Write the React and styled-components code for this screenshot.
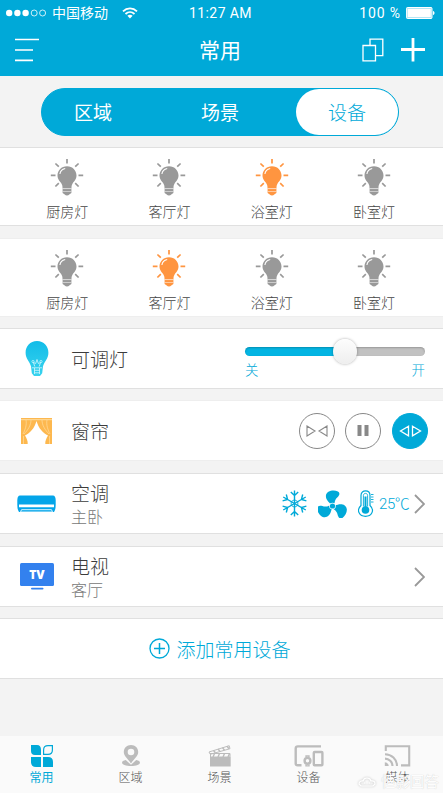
import React from 'react';
import styled, { createGlobalStyle, css } from 'styled-components';

const BLUE = '#00a9d8';
const GREY = '#999999';
const ORANGE = '#ff9540';
const LINE = '#e0e0e0';

const GlobalStyle = createGlobalStyle`
  * {
    box-sizing: border-box;
  }

  body {
    margin: 0;
    background: #fff;
    font-family: "Noto Sans CJK SC", sans-serif;
    font-weight: 300;
    overflow: hidden;
  }

  svg {
    display: block;
    flex: none;
  }
`;

const Phone = styled.div`
  width: 443px;
  height: 793px;
  display: flex;
  flex-direction: column;
  background: #f3f3f3;
  overflow: hidden;
`;

const Header = styled.header`
  flex: none;
  height: 76px;
  background: ${BLUE};
  color: #fff;
`;

const StatusBar = styled.div`
  display: grid;
  grid-template-columns: 1fr auto 1fr;
  align-items: center;
  height: 25px;
  padding: 0 8px 0 6px;
`;

const StatusGroup = styled.div`
  display: flex;
  align-items: center;
  justify-content: ${props => (props.$end ? 'flex-end' : 'flex-start')};
  gap: 5px;
`;

const StatusText = styled.span`
  font-family: Roboto, "Noto Sans CJK SC", sans-serif;
  font-size: 14px;
  line-height: 20px;
  font-weight: 400;
  letter-spacing: ${props => props.$spacing || 0}px;
  white-space: nowrap;
`;

const NavBar = styled.div`
  display: grid;
  grid-template-columns: 1fr auto 1fr;
  align-items: center;
  height: 50px;
  padding: 0 18px 0 15px;
`;

const NavTitle = styled.h1`
  margin: -2px 0 0;
  font-size: 21px;
  line-height: 30px;
  font-weight: 400;
`;

const NavActions = styled.div`
  display: flex;
  align-items: center;
  justify-content: flex-end;
  gap: 17px;
`;

const Segments = styled.div`
  flex: none;
  display: grid;
  grid-template-columns: 102px 1fr 102px;
  width: 358px;
  height: 48px;
  margin: 12px 0 11px 41px;
  border: 1px solid ${BLUE};
  border-radius: 24px;
  background: ${BLUE};
`;

const Segment = styled.button`
  border: 0;
  padding: 0 0 1px;
  border-radius: 23px;
  font: inherit;
  font-size: 19px;
  line-height: 28px;
  font-weight: 400;
  color: #fff;
  background: transparent;

  ${props => props.$active && css`
    font-weight: 300;
    color: ${BLUE};
    background: #fff;
  `}
`;

const LampRow = styled.section`
  flex: none;
  display: grid;
  grid-template-columns: repeat(4, 102.3px);
  height: 79px;
  margin-bottom: ${props => props.$gap}px;
  padding: 10px 0 0 16px;
  background: #fff;
  border: solid ${props => (props.$faint ? '#eeeeee' : LINE)};
  border-width: 1px 0;
`;

const Lamp = styled.div`
  display: flex;
  flex-direction: column;
  align-items: center;
  font-size: 14px;
  line-height: 20px;
  color: #444;
  gap: 5px;
`;

const Row = styled.section`
  flex: none;
  display: flex;
  align-items: center;
  height: 61px;
  margin-bottom: ${props => props.$gap || 12}px;
  padding-right: ${props => props.$right || 18}px;
  background: #fff;
  border: solid ${props => (props.$faint ? '#eeeeee' : LINE)};
  border-width: 1px 0;
`;

const RowIcon = styled.div`
  display: flex;
  justify-content: center;
  width: 71px;
  padding-left: 2px;
`;

const RowText = styled.div`
  flex: 1;
`;

const RowTitle = styled.div`
  font-size: 19px;
  line-height: 24px;
  color: #3c3c3c;
`;

const RowSubtitle = styled.div`
  font-size: 16px;
  line-height: 22px;
  color: #777;
`;

const Dimmer = styled.div`
  width: 180px;
  padding-top: 9px;
`;

const Track = styled.div`
  position: relative;
  height: 9px;
  border-radius: 5px;
  background: linear-gradient(90deg, #04b5e3 55%, #c2c2c2 55%);
  box-shadow: inset 0 1px 2px rgba(0, 0, 0, 0.22);
`;

const Knob = styled.div`
  position: absolute;
  top: -8px;
  left: 88px;
  width: 24px;
  height: 25px;
  border-radius: 50%;
  background: linear-gradient(#fdfdfd, #eeeeee);
  box-shadow: 0 0 3px rgba(0, 0, 0, 0.35);
`;

const DimmerLabels = styled.div`
  display: flex;
  justify-content: space-between;
  margin-top: 3px;
  font-size: 13.5px;
  line-height: 20px;
  color: ${BLUE};
`;

const CurtainControls = styled.div`
  display: flex;
  gap: 10px;

  button:last-child {
    margin-left: 1px;
  }
`;

const RoundButton = styled.button`
  display: flex;
  align-items: center;
  justify-content: center;
  width: 36px;
  height: 36px;
  padding: 0;
  border-radius: 50%;
  color: ${props => (props.$active ? '#fff' : '#888')};
  border: 1px solid ${props => (props.$active ? BLUE : '#888')};
  background: ${props => (props.$active ? BLUE : '#fff')};
`;

const AirStatus = styled.div`
  display: flex;
  align-items: center;
  color: ${BLUE};
  margin-right: 5px;
  gap: 11px;
`;

const Temperature = styled.span`
  margin-left: -6px;
  width: 30px;
  font-family: Roboto, "Noto Sans CJK SC", sans-serif;
  font-size: 15px;
  line-height: 20px;
  letter-spacing: -0.4px;
  white-space: nowrap;
`;

const AddButton = styled.button`
  flex: none;
  display: flex;
  align-items: center;
  justify-content: center;
  gap: 6px;
  height: 61px;
  padding: 0 3px 0 0;
  background: #fff;
  border: solid ${LINE};
  border-width: 1px 0;
  font: inherit;
  font-size: 19px;
  line-height: 28px;
  color: ${BLUE};
`;

const TabBar = styled.nav`
  position: relative;
  display: grid;
  grid-template-columns: repeat(5, 89px);
  height: 57px;
  margin-top: auto;
  padding-top: 9px;
  background: #fafafa;
  overflow: hidden;
`;

const Tab = styled.div`
  display: flex;
  flex-direction: column;
  align-items: center;
  gap: 1px;
  margin-left: -6px;
  font-size: 12px;
  line-height: 18px;
  font-weight: ${props => (props.$active ? 400 : 300)};
  color: ${props => (props.$active ? BLUE : '#555')};

  svg {
    color: ${props => (props.$active ? BLUE : '#bcbcbc')};
  }
`;

const Watermark = styled.div`
  position: absolute;
  right: 4px;
  bottom: 2px;
  display: flex;
  align-items: center;
  gap: 5px;
  font-size: 14.5px;
  line-height: 20px;
  font-weight: 400;
  color: #fdfdfd;
  text-shadow: 0 0 1px #c4c4c4;
`;

const Signal = () => (
  <svg width="41" height="12" fill="none" stroke="#fff">
    <circle cx="3.2" cy="6" r="3.2" fill="#fff" stroke="none" />
    <circle cx="11.4" cy="6" r="3.2" fill="#fff" stroke="none" />
    <circle cx="19.6" cy="6" r="3.2" fill="#fff" stroke="none" />
    <circle cx="28.2" cy="6" r="3" strokeWidth="0.8" />
    <circle cx="36.6" cy="6" r="3" strokeWidth="0.8" />
  </svg>
);

const WifiIcon = styled.svg`
  margin-left: 9px;
`;

const Wifi = () => (
  <WifiIcon width="16" height="12" viewBox="0 0 16 12" fill="none" stroke="#fff" strokeWidth="1.8">
    <path d="M1 4.3C5 .4 11 .4 15 4.3M3.5 7C6.2 4.4 9.8 4.4 12.5 7" />
    <path d="M5.4 8.8C7 7.4 9 7.4 10.6 8.8L8 11.5Z" fill="#fff" stroke="none" />
  </WifiIcon>
);

const Battery = () => (
  <svg width="29" height="12" viewBox="0 0 29 12">
    <rect x=".5" y=".5" width="25.5" height="11" rx="1" fill="#fff" stroke="#fff" />
    <path d="M1.3 1.5H25.2V10.5H1.3Z" fill="none" stroke={BLUE} strokeWidth=".3" />
    <path d="M27 4C29 4.4 29 7.6 27 8Z" fill="#fff" />
  </svg>
);

const MenuIcon = () => (
  <svg width="24" height="24" stroke="#fff" strokeWidth="1.7">
    <path d="M0 1.5H24M0 12H18M0 22.3H18" />
  </svg>
);

const CopyIcon = () => (
  <svg width="22" height="24" fill="none" stroke="#fff" strokeWidth="1.3">
    <path d="M1 7.5H13.5V22.8H1ZM8 7.5V1.2H20.8V17.7H14" />
  </svg>
);

const PlusIcon = () => (
  <svg width="24" height="24" stroke="#fff" strokeWidth="2.8">
    <path d="M12 0V23.5M0 11.5H24" />
  </svg>
);

const BulbIcon = ({ on }) => {
  const color = on ? ORANGE : GREY;
  return (
    <svg width="34" height="38" viewBox="0 0 34 38" fill="none" stroke={color}>
      <path
        d="M17 1V5.5M0.8 17.3H5.5M28.5 17.3H33.2M5.4 5.5L8.8 8.7M28.6 5.5L25.2 8.7M5.4 28.5L8.8 25.2M28.6 28.5L25.2 25.2"
        strokeWidth="1.7"
      />
      <path
        d="M17 8.2C11.4 8.2 7.5 12.5 7.5 17.4C7.5 21.2 9.8 23 11.4 25.4C12.4 27 12.5 28.3 12.5 30.5H21.5C21.5 28.3 21.6 27 22.6 25.4C24.2 23 26.5 21.2 26.5 17.4C26.5 12.5 22.6 8.2 17 8.2Z"
        fill={color}
        stroke="none"
      />
      <path d="M12.6 30.6H21.4V35L19.6 36.2Q17 38.8 14.4 36.2L12.6 35Z" fill={color} stroke="none" />
      <path d="M12.5 30.6H21.5M12.8 33.5H21.2" stroke="#fff" strokeWidth=".5" />
      <path d="M9.9 16C10.3 13 12.3 11.1 15.2 10.5" stroke="#fff" strokeWidth="1.1" />
    </svg>
  );
};

const DimmableBulb = () => (
  <svg width="24" height="36" viewBox="0 0 24 36" fill="none">
    <defs>
      <linearGradient id="dimmable" x2="0" y2="1">
        <stop stopColor="#12bce8" />
        <stop offset="1" stopColor="#38d3ee" />
      </linearGradient>
    </defs>
    <path
      d="M12 0C5 0 .6 5.3.6 11.7C.6 17.8 4.7 20.5 6 25.3L6.8 32.2L9 35H15L17.2 32.2L18 25.3C19.3 20.5 23.4 17.8 23.4 11.7C23.4 5.3 19 0 12 0Z"
      fill="url(#dimmable)"
    />
    <path
      d="M9.8 25.5L8.4 21.5L10.7 22.5L12 18.5L13.3 22.5L15.6 21.5L14.2 25.5M7 26.8H17M9.5 29.3H14.5M9.5 31.8H14.5M9.5 27V33M14.5 27V33"
      stroke="#d5f8ff"
      strokeWidth=".8"
    />
    <circle cx="8" cy="20.5" r="1.1" stroke="#d5f8ff" strokeWidth=".7" />
    <circle cx="16" cy="20.5" r="1.1" stroke="#d5f8ff" strokeWidth=".7" />
  </svg>
);

const CurtainIcon = () => (
  <svg width="31" height="28" viewBox="0 0 31 28">
    <path
      d="M0 1H31V27H24.3C24 24 25.4 21 27 18.4C22 16.5 17.5 11 15.5 4C13.5 11 9 16.5 4 18.4C5.6 21 7 24 6.7 27H0Z"
      fill="#fdb84f"
    />
    <path d="M0 2.7H31" stroke="#ffdd9e" strokeWidth="1" />
    <path
      d="M5 3C6 8 4 13 2 17M10 3C10 8 7 13 3 17M26 3C25 8 27 13 29 17M21 3C21 8 24 13 28 17M2.5 19V27M28.5 19V27"
      stroke="#ffdc9d"
      strokeWidth=".7"
      fill="none"
    />
  </svg>
);

const AirConditioner = () => (
  <svg width="39" height="18" viewBox="0 0 39 18">
    <path d="M3 .5H36Q38.5.5 38.7 5V9.5Q38.7 15 37 17H2Q.3 15 .3 9.5V5Q.5.5 3 .5Z" fill="#04a5e9" />
    <path d="M2 9.4H37V12.2H2Z" fill="#fff" />
    <path d="M3.5 17L4.5 14.7H34.5L35.5 17" fill="none" stroke="#d9f4ff" strokeWidth="1" />
    <path d="M4 17H35" stroke="#fff" strokeWidth=".9" />
  </svg>
);

const TvText = styled.text`
  font: 800 12px "Open Sans", sans-serif;
  fill: #fff;
`;

const TvIcon = () => (
  <svg width="34" height="27" viewBox="0 0 34 27">
    <rect width="34" height="23" rx="1.5" fill="#3381ee" />
    <TvText x="17" y="16" textAnchor="middle">TV</TvText>
    <rect x="11" y="24.7" width="12.5" height="1.8" rx=".9" fill="#3381ee" />
  </svg>
);

const CloseCurtainIcon = () => (
  <svg width="22" height="12" fill="none" stroke="currentColor" strokeWidth="1.1">
    <path d="M1 1L9 6L1 11ZM21 1L13 6L21 11Z" />
  </svg>
);

const PauseIcon = () => (
  <svg width="12" height="11" fill="currentColor">
    <path d="M.5 0H4.5V11H.5ZM7.5 0H11.5V11H7.5Z" />
  </svg>
);

const OpenCurtainIcon = () => (
  <svg width="23" height="12" fill="none" stroke="currentColor" strokeWidth="1.3">
    <path d="M9.5 1.2L1.5 6L9.5 10.8ZM13.5 1.2L21.5 6L13.5 10.8Z" />
  </svg>
);

const Snowflake = () => (
  <svg width="25" height="27" viewBox="-12.5 -13.5 25 27" fill="none" stroke="currentColor" strokeWidth="1.4">
    {[0, 60, 120, 180, 240, 300].map(angle => (
      <path key={angle} d="M0 0V-13M-3.7-11.6L0-8L3.7-11.6" transform={`rotate(${angle})`} />
    ))}
    <path d="M0-3.8L3.3-1.9V1.9L0 3.8L-3.3 1.9V-1.9Z" strokeWidth=".9" />
  </svg>
);

const Fan = () => (
  <svg width="29" height="28" viewBox="-14.5 -16 29 28" fill="currentColor">
    {[0, 120, 240].map(angle => (
      <path
        key={angle}
        d="M-2-2C-3.5-3.8-6.8-6-6.6-10.3C-6.2-15.2 1-16.8 5.4-14.6C8-13.2 6.8-10.4 5-8.8C3-7 2.3-5.5 2-2.3Z"
        transform={`rotate(${angle})`}
      />
    ))}
    <circle r="3.3" fill="#fff" />
    <circle r="2.6" />
  </svg>
);

const Thermometer = () => (
  <svg width="16" height="27" viewBox="0 0 16 27" fill="none" stroke="currentColor" strokeWidth="1.2">
    <path d="M3 15.5V5.5C3-.6 12-.6 12 5.5V15.5C17.2 20.5 13.4 26.3 7.5 26.3C1.6 26.3-2.2 20.5 3 15.5Z" />
    <path d="M5.4 16.5V5.5C5.4 2.7 9.6 2.7 9.6 5.5V16.5" strokeWidth=".9" />
    <path d="M7.5 6.5V20" strokeWidth="2" />
    <circle cx="7.5" cy="20" r="3.8" fill="currentColor" stroke="none" />
    <path d="M13 4.5H15.5M13 7H15.5M13 9.5H15.5M13 12H15.5" strokeWidth=".9" />
  </svg>
);

const Chevron = () => (
  <svg width="11" height="20" fill="none" stroke="#999" strokeWidth="1.8">
    <path d="M1 1L10 10L1 19" />
  </svg>
);

const CirclePlus = () => (
  <svg width="21" height="21" fill="none" stroke="currentColor" strokeWidth="1.3">
    <circle cx="10.5" cy="10.5" r="9.5" />
    <path d="M10.5 5V16M5 10.5H16" strokeWidth="1.5" />
  </svg>
);

const FavoritesIcon = () => (
  <svg width="22" height="22" fill="currentColor">
    <path d="M0 0H6Q10 0 10 5V10H4Q0 10 0 6ZM0 12H10V22H5Q0 22 0 17ZM12 12H17Q22 12 22 17V22H12Z" />
    <path d="M12.6 9.4V5Q12.6.6 17 .6H21.4V5Q21.4 9.4 17 9.4Z" fill="none" stroke="currentColor" strokeWidth="1.2" />
  </svg>
);

const AreaIcon = () => (
  <svg width="22" height="22" fill="currentColor">
    <path
      fillRule="evenodd"
      d="M11 0C6.7 0 3.8 3 3.8 7C3.8 11 7.3 13.3 11 18.4C14.7 13.3 18.2 11 18.2 7C18.2 3 15.3 0 11 0ZM11 3.7A3.3 3.3 0 1 1 11 10.3A3.3 3.3 0 1 1 11 3.7Z"
    />
    <path d="M5.8 15C1.2 15.6.9 18.8 4.5 20.1C8 21.4 14 21.4 17.5 20.1C21.1 18.8 20.8 15.6 16.2 15L11 19.8Z" />
  </svg>
);

const SceneIcon = () => (
  <svg width="23" height="22" fill="currentColor">
    <path d="M2 12H22.7V21.5H2Z" />
    <path d="M1 7L21.2.7L22 3.7L2.3 9.3Z" fill="none" stroke="currentColor" />
    <path d="M5.5 5.5L7.4 7.8M10 4L12 6.5M14.5 2.6L16.5 5.2M19 1.2L21 3.8" stroke="currentColor" strokeWidth="1.4" />
    <path d="M2.5 8V12H22V8.5H3" fill="none" stroke="currentColor" />
    <path d="M6.5 8.5L5 12M11.5 8.5L10 12M16.5 8.5L15 12M21.5 8.5L20 12" stroke="currentColor" strokeWidth="1.4" />
  </svg>
);

const DevicesIcon = () => (
  <svg width="30" height="22" fill="none" stroke="currentColor" strokeWidth="2.4">
    <path d="M27 1.4H3.8Q1.7 1.4 1.7 3.5V18.5Q1.7 20.2 3.8 20.2H7.5" />
    <rect x="19.8" y="7" width="8.6" height="13.2" rx=".8" />
    <circle cx="13.5" cy="15.8" r="2.9" />
    <path d="M12 12V11H15V12M12 19.5V20.8H15V19.5" strokeWidth="1.3" />
  </svg>
);

const CastIcon = () => (
  <svg width="27" height="22" fill="none" stroke="currentColor" strokeWidth="2.1">
    <path d="M1.8 6V1.2H25.2V20.4H17M1 9.2C7.5 9.2 13 14.2 13 21M1 13.6C5 13.6 8.5 17 8.5 21" />
    <path d="M.8 17.2C3 17.2 4.7 19 4.7 21H.8Z" fill="currentColor" stroke="none" />
  </svg>
);

const MarkIcon = styled.svg`
  filter: drop-shadow(0 0 1px #bbb);
`;

const lampNames = ['厨房灯', '客厅灯', '浴室灯', '卧室灯'];

const tabs = [
  { label: '常用', Icon: FavoritesIcon },
  { label: '区域', Icon: AreaIcon },
  { label: '场景', Icon: SceneIcon },
  { label: '设备', Icon: DevicesIcon },
  { label: '媒体', Icon: CastIcon },
];

function Lamps({ active, gap, faint }) {
  return (
    <LampRow $gap={gap} $faint={faint}>
      {lampNames.map((name, index) => (
        <Lamp key={name}>
          <BulbIcon on={index === active} />
          <span>{name}</span>
        </Lamp>
      ))}
    </LampRow>
  );
}

function App() {
  return (
    <Phone>
      <GlobalStyle />
      <Header>
        <StatusBar>
          <StatusGroup>
            <Signal />
            <StatusText>中国移动</StatusText>
            <Wifi />
          </StatusGroup>
          <StatusText $spacing={0.4}>11:27 AM</StatusText>
          <StatusGroup $end>
            <StatusText $spacing={0.9}>100 %</StatusText>
            <Battery />
          </StatusGroup>
        </StatusBar>
        <NavBar>
          <MenuIcon />
          <NavTitle>常用</NavTitle>
          <NavActions>
            <CopyIcon />
            <PlusIcon />
          </NavActions>
        </NavBar>
      </Header>

      <Segments>
        <Segment>区域</Segment>
        <Segment>场景</Segment>
        <Segment $active>设备</Segment>
      </Segments>

      <Lamps active={2} gap={12} />
      <Lamps active={1} gap={11} faint />

      <Row $gap={11}>
        <RowIcon><DimmableBulb /></RowIcon>
        <RowText><RowTitle>可调灯</RowTitle></RowText>
        <Dimmer>
          <Track><Knob /></Track>
          <DimmerLabels><span>关</span><span>开</span></DimmerLabels>
        </Dimmer>
      </Row>

      <Row $right={15} $faint>
        <RowIcon><CurtainIcon /></RowIcon>
        <RowText><RowTitle>窗帘</RowTitle></RowText>
        <CurtainControls>
          <RoundButton><CloseCurtainIcon /></RoundButton>
          <RoundButton><PauseIcon /></RoundButton>
          <RoundButton $active><OpenCurtainIcon /></RoundButton>
        </CurtainControls>
      </Row>

      <Row>
        <RowIcon><AirConditioner /></RowIcon>
        <RowText>
          <RowTitle>空调</RowTitle>
          <RowSubtitle>主卧</RowSubtitle>
        </RowText>
        <AirStatus>
          <Snowflake />
          <Fan />
          <Thermometer />
          <Temperature>25℃</Temperature>
        </AirStatus>
        <Chevron />
      </Row>

      <Row $gap={11}>
        <RowIcon><TvIcon /></RowIcon>
        <RowText>
          <RowTitle>电视</RowTitle>
          <RowSubtitle>客厅</RowSubtitle>
        </RowText>
        <Chevron />
      </Row>

      <AddButton>
        <CirclePlus />
        <span>添加常用设备</span>
      </AddButton>

      <TabBar>
        {tabs.map(({ label, Icon }, index) => (
          <Tab key={label} $active={index === 0}>
            <Icon />
            <span>{label}</span>
          </Tab>
        ))}
        <Watermark>
          <MarkIcon width="18" height="11" fill="none" stroke="#fff" strokeWidth="1.2">
            <path d="M1 8C1 5 4 4.5 5 5C6 1 12 1 13 5C16 4.5 17 6 17 8L15 10H3Z" />
            <path d="M6 7H7M11 7H12" />
          </MarkIcon>
          <span>恒影回答</span>
        </Watermark>
      </TabBar>
    </Phone>
  );
}

export default App;
